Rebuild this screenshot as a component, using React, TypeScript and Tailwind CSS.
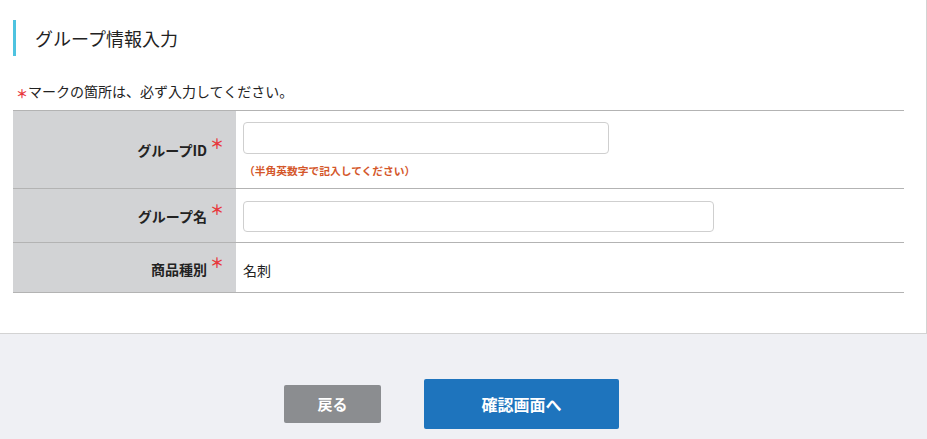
import React, { FC } from 'react'

const Req: FC<{ className?: string }> = ({ className }) => (
    <span className={`text-[#e8383d] ${className ?? ''}`}>＊</span>
)

interface rowProps {
    label: string;
    children: React.ReactNode;
    rowClass: string;
}
const Row: FC<rowProps> = ({ label, children, rowClass }) => {
    return (
        <div className={`flex border-b border-[#b3b3b3] ${rowClass}`}>
            <div className="w-[223px] bg-[#d2d3d5] flex items-start justify-end pr-[12px]">
                <span className="font-bold text-[14px] text-[#222] leading-none">{label}</span>
                <Req className="ml-[3px] text-[14px] font-bold leading-none -mt-[7px]" />
            </div>
            <div className="flex-1 pl-[7px]">{children}</div>
        </div>
    )
}

const App: FC = () => {
    return (
        <div className="w-[927px] h-[439px] bg-[#eff0f4] overflow-hidden" style={{ fontFamily: '"Noto Sans CJK JP", "Noto Sans", sans-serif' }}>
            <div className="bg-white border-r border-b border-[#d3d3d3] h-[334px]">
                <div className="pt-[20px] pl-[13px]">
                    <div className="border-l-[3px] border-[#4ec3e0] h-[36px] flex items-center pl-[19px]">
                        <h2 className="text-[18px] text-[#222]">グループ情報入力</h2>
                    </div>
                </div>
                <p className="mt-[27px] ml-[16px] text-[14px] text-[#222] flex items-center h-[17px]">
                    <Req className="text-[12px] font-bold mt-[5px] leading-none" />
                    <span>マークの箇所は、必ず入力してください。</span>
                </p>
                <div className="ml-[13px] mr-[22px] mt-[10px] border-t border-[#b3b3b3]">
                    <Row label="グループID" rowClass="h-[78px] [&>div:first-child]:pt-[32px]">
                        <input className="mt-[11px] w-[366px] h-[32px] border border-[#cfcfcf] rounded-[4px] outline-none" />
                        <p className="mt-[12px] ml-[1px] text-[10.75px] font-bold text-[#d4572a] leading-none">（半角英数字で記入してください）</p>
                    </Row>
                    <Row label="グループ名" rowClass="h-[54px] [&>div:first-child]:pt-[20px]">
                        <input className="mt-[12px] w-[471px] h-[31px] border border-[#cfcfcf] rounded-[4px] outline-none" />
                    </Row>
                    <Row label="商品種別" rowClass="h-[50px] [&>div:first-child]:pt-[19px]">
                        <p className="mt-[20px] text-[14px] text-[#222] leading-none">名刺</p>
                    </Row>
                </div>
            </div>
            <div className="flex items-center justify-center pr-[24px] gap-[43px] h-[140px]">
                <button className="w-[97px] h-[38px] bg-[#8b8d90] rounded-[2px] text-white font-bold text-[15px]">戻る</button>
                <button className="w-[195px] h-[50px] bg-[#1e74bd] rounded-[2px] text-white font-bold text-[16px]">確認画面へ</button>
            </div>
        </div>
    )
}

export default App
